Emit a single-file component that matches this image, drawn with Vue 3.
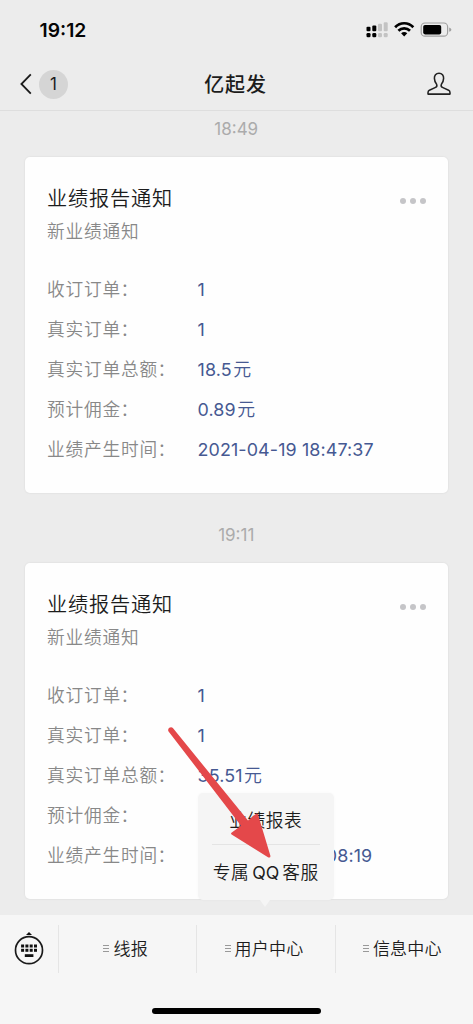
<script setup>
const messages = [
  {
    time: '18:49',
    rows: [
      ['收订订单', '1', ''],
      ['真实订单', '1', ''],
      ['真实订单总额', '18.5', '元'],
      ['预计佣金', '0.89', '元'],
      ['业绩产生时间', '2021-04-19 18:47:37', '']
    ]
  },
  {
    time: '19:11',
    rows: [
      ['收订订单', '1', ''],
      ['真实订单', '1', ''],
      ['真实订单总额', '35.51', '元'],
      ['预计佣金', '', ''],
      ['业绩产生时间', '2021-04-19 19:08:19', '']
    ]
  }
]
const menus = ['线报', '用户中心', '信息中心']
const keys = [0, 1, 2, 3]
</script>

<template>
  <div class="phone">
    <header class="top">
      <div class="status">
        <span class="clock">19:12</span>
        <svg class="indicators" width="90" height="20" viewBox="0 0 90 20">
          <g fill="#000">
            <rect x="1.5" y="8.7" width="4" height="4.6" rx="1.1" />
            <rect x="7.3" y="7.5" width="4" height="5.8" rx="1.1" />
            <rect x="1.5" y="15" width="4" height="4.2" rx="1.3" />
            <rect x="7.3" y="15" width="4" height="4.2" rx="1.3" />
          </g>
          <g fill="#c3c3c3">
            <rect x="13" y="5.8" width="4" height="7.5" rx="1.1" />
            <rect x="18.7" y="4.3" width="4" height="9" rx="1.1" />
            <rect x="13" y="15" width="4" height="4.2" rx="1.3" />
            <rect x="18.7" y="15" width="4" height="4.2" rx="1.3" />
          </g>
          <g fill="none" stroke="#000" stroke-width="2.7">
            <path d="M30.1 9.2C35.2 3.9 43.2 3.9 48.3 9.2" />
            <path d="M33.4 12.8C36.6 9.6 41.8 9.6 45 12.8" />
          </g>
          <path d="M36.1 15.2Q39.2 12.6 42.3 15.2L39.2 18.5Z" fill="#000" />
          <rect x="56.2" y="5" width="26.4" height="13.2" rx="3.8" fill="none" stroke="#a0a0a0" stroke-width="1.2" />
          <rect x="58.2" y="7" width="18" height="9.4" rx="1.8" fill="#000" />
          <path d="M84.2 9.6Q86.4 10.4 86.4 11.7Q86.4 13 84.2 13.8Z" fill="#a0a0a0" />
        </svg>
      </div>
      <div class="nav">
        <div class="back">
          <svg width="14" height="22" viewBox="0 0 14 22"><path d="M11.8 1.4L2.4 11L11.8 20.6" fill="none" stroke="#1b1b1b" stroke-width="1.8" /></svg>
          <span class="count">1</span>
        </div>
        <h1>亿起发</h1>
        <svg class="person" width="26" height="26" viewBox="0 0 26 26">
          <path d="M13 2.2C9.9 2.2 8.2 4.4 8.4 7.4C8.5 10 9.3 11.8 10.6 13.2Q11.5 15.5 9.6 16.4L3.4 19.2Q2 20 2 21.8V23.1H24V21.8Q24 20 22.6 19.2L16.4 16.4Q14.5 15.5 15.4 13.2C16.7 11.8 17.5 10 17.6 7.4C17.8 4.4 16.1 2.2 13 2.2Z" fill="none" stroke="#222" stroke-width="1.55" stroke-linejoin="round" />
        </svg>
      </div>
    </header>

    <main>
      <section v-for="message in messages" :key="message.time" class="message">
        <time>{{ message.time }}</time>
        <article class="card">
          <div class="heading">
            <h2>业绩报告通知</h2>
            <span class="more"><i /><i /><i /></span>
          </div>
          <p class="sub">新业绩通知</p>
          <dl>
            <div v-for="row in message.rows" :key="row[0]" class="row">
              <dt>{{ row[0] }}<span class="colon">：</span></dt>
              <dd>{{ row[1] }}<span v-if="row[2]" class="unit">{{ row[2] }}</span></dd>
            </div>
          </dl>
        </article>
      </section>
    </main>

    <footer>
      <div class="menubar">
        <div class="keyboard">
          <svg width="32" height="36" viewBox="0 0 32 36">
            <path d="M13 3.9L16 1L19 3.9Z" fill="#111" />
            <circle cx="16" cy="19.2" r="13.5" fill="none" stroke="#1a1a1a" stroke-width="1.7" />
            <g fill="#111">
              <rect v-for="k in keys" :key="k" :x="8.1 + k * 4.3" y="13.5" width="3" height="3" />
              <rect v-for="k in keys" :key="'b' + k" :x="8.1 + k * 4.3" y="17.8" width="3" height="3" />
              <rect x="11.8" y="23.2" width="8.6" height="2.8" />
            </g>
          </svg>
        </div>
        <div v-for="menu in menus" :key="menu" class="menu">
          <span class="lines"><i /><i /><i /></span><span class="name">{{ menu }}</span>
        </div>
      </div>
      <div class="home" />
    </footer>

    <div class="popup">
      <div class="option">业绩报表</div>
      <div class="option">专属<span class="latin">QQ</span>客服</div>
    </div>
    <svg class="arrow" width="120" height="145" viewBox="0 0 120 145">
      <path d="M8.4 10.2Q7.6 8 9.3 6.8Q11.5 5.6 13.3 7.4L88 99.6L96 92.7Q97.5 91.8 98 93.4L110.4 134.8Q110.6 137.2 108.4 136.4L71.6 113.6Q70.4 112.4 71.8 111.4L81 104.8Z" fill="#e4484a" />
    </svg>
  </div>
</template>

<style>
body { background: #ececec; overflow: hidden; }
</style>

<style scoped>
* { box-sizing: border-box; }
.phone {
  position: relative;
  width: 473px;
  height: 1024px;
  overflow: hidden;
  display: flex;
  flex-direction: column;
  background: #ececec;
  font-family: Inter, "Noto Sans CJK SC", sans-serif;
  color: #1c1c1c;
}
h1, h2, p, dl, dd { margin: 0; font-weight: 400; }
.top { height: 111px; border-bottom: 1px solid #dedede; flex: none; }
.status { height: 60px; display: flex; justify-content: space-between; padding: 18px 18px 0 39.5px; }
.clock { font-size: 19.3px; line-height: 25px; font-weight: 600; color: #050505; }
.nav { height: 48px; display: grid; grid-template-columns: 1fr auto 1fr; align-items: center; padding: 0 21px 0 19px; }
.back { display: flex; align-items: center; gap: 6px; }
.count { width: 29px; height: 29px; border-radius: 50%; background: #d5d5d5; text-align: center; font-size: 17px; line-height: 29px; }
h1 { font-size: 20px; letter-spacing: .8px; font-weight: 500; line-height: 28px; padding-top: 2px; }
.person { justify-self: end; }
main { flex: 1; min-height: 0; overflow: hidden; padding: 0 25px 0 24.5px; }
.message { height: 406.4px; }
time { display: block; height: 45.5px; padding-top: 8px; text-align: center; font-size: 17px; line-height: 20px; color: #ababab; }
.card { height: 336.5px; padding: 25px 22.5px 0 22.5px; border-radius: 5px; background: #fefefe; box-shadow: 0 0 1px 1px #e5e5e5; }
.heading { height: 34px; display: flex; justify-content: space-between; align-items: center; }
h2 { font-size: 20.2px; line-height: 34px; letter-spacing: .8px; font-weight: 350; }
.more { display: flex; gap: 4px; padding-top: 5px; }
.more i { width: 6px; height: 6px; border-radius: 50%; background: #c5c5c8; }
.sub { font-size: 17.7px; line-height: 32px; letter-spacing: .8px; color: #888; font-weight: 350; }
dl { padding-top: 22px; }
.row { display: grid; grid-template-columns: 150.5px 1fr; height: 40px; line-height: 40px; font-size: 17.7px; white-space: nowrap; }
dt { color: #888; letter-spacing: .8px; font-weight: 350; }
.colon { margin-left: -.4px; }
dd { color: #465992; font-size: 17.9px; letter-spacing: .12px; }
.unit { margin-left: 1.5px; font-weight: 350; }
footer { flex: none; height: 109px; background: #f6f6f6; }
.menubar { height: 68px; display: flex; align-items: center; }
.keyboard { width: 58px; display: flex; justify-content: center; }
.menu { flex: 1; height: 48px; display: flex; align-items: center; justify-content: center; gap: 4px; padding-right: 4px; border-left: 1px solid #e5e5e5; font-size: 17px; letter-spacing: .2px; font-weight: 350; }
.name { line-height: 26px; padding-bottom: 1px; }
.lines { display: flex; flex-direction: column; gap: 2px; padding-bottom: 1px; }
.lines i { width: 6px; height: 1px; background: #999; }
.home { width: 169px; height: 6px; border-radius: 3px; background: #000; margin: 25px auto 0; }
.popup { position: absolute; left: 198px; top: 792.5px; width: 135.5px; height: 107.5px; padding: 1px 14px; border-radius: 5px; background: #f5f5f5; box-shadow: 0 0 3px #00000008; }
.popup::after { content: ""; position: absolute; left: 62px; top: 107px; border: solid transparent; border-width: 7px 5.5px 0; border-top-color: #f5f5f5; }
.option { height: 50.5px; line-height: 54px; font-size: 17.7px; letter-spacing: .5px; text-align: center; white-space: nowrap; font-weight: 350; }
.option + .option { border-top: 1px solid #e4e4e4; line-height: 55px; }
.latin { margin: 0 3px; letter-spacing: 0; font-weight: 400; }
.arrow { position: absolute; left: 160px; top: 721px; }
</style>
